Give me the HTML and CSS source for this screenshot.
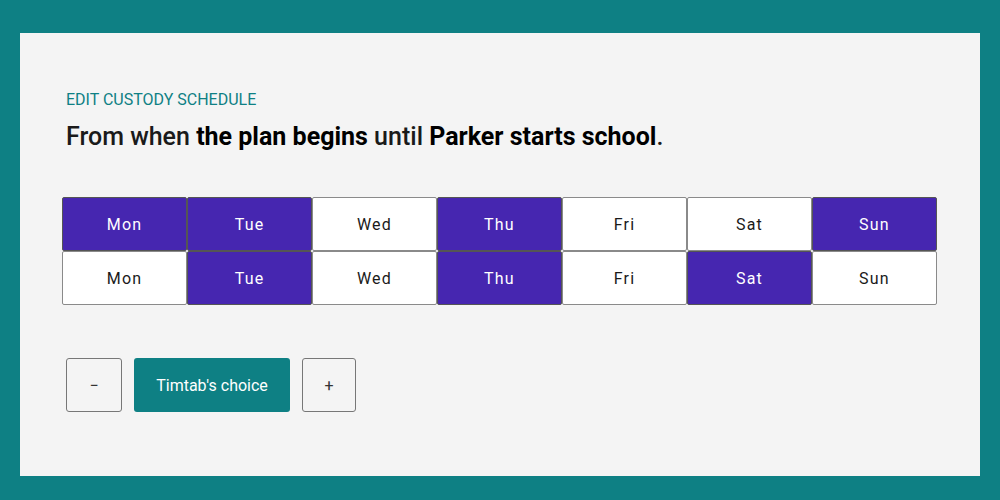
FILE: index.html
```html
<!DOCTYPE html>
<html lang="en">
<head>
  <meta charset="UTF-8" />
  <title>Edit custody schedule</title>
  <link rel="stylesheet" href="styles.css">
</head>
<body>
  <div class="panel">
    <div class="label">EDIT CUSTODY SCHEDULE</div>
    <h1>From when <strong>the plan begins</strong> until <strong>Parker starts school</strong>.</h1>

    <div class="week">
      <div class="day on">Mon</div>
      <div class="day on">Tue</div>
      <div class="day">Wed</div>
      <div class="day on">Thu</div>
      <div class="day">Fri</div>
      <div class="day">Sat</div>
      <div class="day on">Sun</div>

      <div class="day">Mon</div>
      <div class="day on">Tue</div>
      <div class="day">Wed</div>
      <div class="day on">Thu</div>
      <div class="day">Fri</div>
      <div class="day on">Sat</div>
      <div class="day">Sun</div>
    </div>

    <div class="controls">
      <button class="step minus">&minus;</button>
      <button class="choice">Timtab's choice</button>
      <button class="step">+</button>
    </div>
  </div>
</body>
</html>
```

FILE: styles.css
```css
body {
  margin: 0;
  padding: 33px 20px 24px;
  background: #0e8084;
  font-family: Roboto, "Liberation Sans", sans-serif;
}
.panel {
  background: #f4f4f4;
  height: 443px;
  box-sizing: border-box;
  padding: 58px 43px 0 42px;
}
.label {
  color: #0e8084;
  font-size: 16px;
  padding-left: 4px;
  line-height: 18px;
}
h1 {
  margin: 13px 0 0;
  padding-left: 4px;
  font-size: 25px;
  font-weight: 500;
  color: #1a1a1a;
  line-height: 30px;
}
h1 strong {
  font-weight: 700;
  color: #000;
}
.week {
  margin-top: 45px;
  display: grid;
  grid-template-columns: repeat(7, 125px);
  grid-auto-rows: 54px;
}
.day {
  display: flex;
  align-items: center;
  justify-content: center;
  background: #fff;
  border: 1px solid #8a8a8a;
  border-radius: 2px;
  font-size: 16px;
  letter-spacing: 1.2px;
  color: #1a1a1a;
}
.day.on {
  background: #4626b0;
  color: #fff;
  border-color: #555;
}
.controls {
  margin-top: 53px;
  padding-left: 4px;
  display: flex;
  gap: 12px;
}
.controls button {
  height: 54px;
  border-radius: 3px;
  font-family: inherit;
  font-size: 16px;
}
.step {
  width: 54px;
  background: #f4f4f4;
  border: 1px solid #777;
  color: #333;
  font-size: 15px;
}
.step.minus {
  width: 56px;
}
.choice {
  width: 156px;
  background: #0e8084;
  border: 0;
  color: #fff;
}
```
